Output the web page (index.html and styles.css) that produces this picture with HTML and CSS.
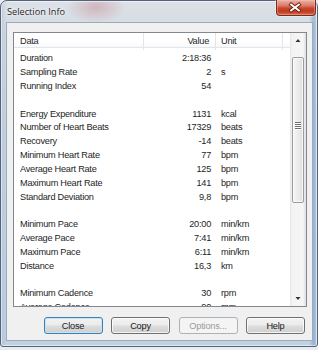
FILE: index.html
```html
<!DOCTYPE html>
<html>
<head>
<meta charset="utf-8">
<link rel="stylesheet" href="styles.css">
</head>
<body>
<div class="window">
  <div class="titlebar">
    <span class="title">Selection Info</span>
    <div class="close-btn">
      <svg width="40" height="16" viewBox="0 0 40 16">
        <g transform="translate(19.5 7.5)">
          <path d="M-4,-3 L4,3 M4,-3 L-4,3" stroke="#6a2014" stroke-width="3.8" stroke-linecap="square" fill="none"/>
          <path d="M-4,-3 L4,3 M4,-3 L-4,3" stroke="#ffffff" stroke-width="2" stroke-linecap="square" fill="none"/>
        </g>
      </svg>
    </div>
  </div>
  <div class="client">
    <div class="listbox">
      <div class="list-main">
        <div class="header">
          <div class="hcell c-data">Data</div>
          <div class="hcell c-value">Value</div>
          <div class="hcell c-unit">Unit</div>
          <div class="hcell c-fill"></div>
        </div>
        <div class="rows">
          <div class="row"><span class="c-data">Duration</span><span class="c-value">2:18:36</span><span class="c-unit"></span></div>
          <div class="row"><span class="c-data">Sampling Rate</span><span class="c-value">2</span><span class="c-unit">s</span></div>
          <div class="row"><span class="c-data">Running Index</span><span class="c-value">54</span><span class="c-unit"></span></div>
          <div class="row"><span class="c-data"></span><span class="c-value"></span><span class="c-unit"></span></div>
          <div class="row"><span class="c-data">Energy Expenditure</span><span class="c-value">1131</span><span class="c-unit">kcal</span></div>
          <div class="row"><span class="c-data">Number of Heart Beats</span><span class="c-value">17329</span><span class="c-unit">beats</span></div>
          <div class="row"><span class="c-data">Recovery</span><span class="c-value">-14</span><span class="c-unit">beats</span></div>
          <div class="row"><span class="c-data">Minimum Heart Rate</span><span class="c-value">77</span><span class="c-unit">bpm</span></div>
          <div class="row"><span class="c-data">Average Heart Rate</span><span class="c-value">125</span><span class="c-unit">bpm</span></div>
          <div class="row"><span class="c-data">Maximum Heart Rate</span><span class="c-value">141</span><span class="c-unit">bpm</span></div>
          <div class="row"><span class="c-data">Standard Deviation</span><span class="c-value">9,8</span><span class="c-unit">bpm</span></div>
          <div class="row"><span class="c-data"></span><span class="c-value"></span><span class="c-unit"></span></div>
          <div class="row"><span class="c-data">Minimum Pace</span><span class="c-value">20:00</span><span class="c-unit">min/km</span></div>
          <div class="row"><span class="c-data">Average Pace</span><span class="c-value">7:41</span><span class="c-unit">min/km</span></div>
          <div class="row"><span class="c-data">Maximum Pace</span><span class="c-value">6:11</span><span class="c-unit">min/km</span></div>
          <div class="row"><span class="c-data">Distance</span><span class="c-value">16,3</span><span class="c-unit">km</span></div>
          <div class="row"><span class="c-data"></span><span class="c-value"></span><span class="c-unit"></span></div>
          <div class="row"><span class="c-data">Minimum Cadence</span><span class="c-value">30</span><span class="c-unit">rpm</span></div>
          <div class="row"><span class="c-data">Average Cadence</span><span class="c-value">90</span><span class="c-unit">rpm</span></div>
        </div>
      </div>
      <div class="scrollbar">
        <div class="sb-arrow"><svg width="16" height="15" viewBox="0 0 16 15"><path d="M5.5,9 L8,6 L10.5,9 Z" fill="#333"/></svg></div>
        <div class="sb-thumb">
          <div class="grip"><i></i><i></i><i></i><i></i></div>
        </div>
        <div class="sb-space"></div>
        <div class="sb-arrow"><svg width="16" height="15" viewBox="0 0 16 15"><path d="M5.5,6 L8,9 L10.5,6 Z" fill="#333"/></svg></div>
      </div>
    </div>
    <div class="buttons">
      <div class="btn btn-default">Close</div>
      <div class="btn">Copy</div>
      <div class="btn btn-disabled">Options...</div>
      <div class="btn">Help</div>
    </div>
  </div>
</div>
</body>
</html>
```
FILE: styles.css
```css
html, body {
  margin: 0;
  padding: 0;
}
body {
  width: 318px;
  height: 350px;
  overflow: hidden;
  background: #e9edf1;
  font-family: "Liberation Sans", Arial, sans-serif;
}
.window {
  width: 318px;
  height: 347px;
  box-sizing: border-box;
  border: 1px solid #53647a;
  border-radius: 7px 7px 3px 3px;
  padding: 0 4px 5px 5px;
  display: flex;
  flex-direction: column;
  background:
    radial-gradient(ellipse 30px 16px at 95px 6px, rgba(196, 130, 138, 0.45), rgba(196, 130, 138, 0) 100%),
    linear-gradient(to right, rgba(150, 175, 205, 0.35) 0, rgba(150, 175, 205, 0) 6px, rgba(150, 175, 205, 0) 308px, rgba(110, 150, 200, 0.55) 313px, rgba(150, 175, 205, 0.2) 316px),
    linear-gradient(to bottom, #dde1e7 0, #d4dbe3 30px, #c9d5e2 120px, #c2d1e1 100%);
  box-shadow: inset 0 0 0 1px rgba(255, 255, 255, 0.55);
}
.titlebar {
  height: 21px;
  display: flex;
  justify-content: space-between;
  align-items: flex-start;
}
.title {
  font-family: "Open Sans", "Noto Sans", sans-serif;
  font-size: 9.2px;
  line-height: 22px;
  color: #1c1f24;
  padding-left: 1px;
  text-shadow: 0 0 5px rgba(255, 255, 255, 0.9), 0 0 2px rgba(255, 255, 255, 0.9);
}
.close-btn {
  width: 40px;
  height: 16px;
  margin-top: -1px;
  margin-right: -3px;
  box-sizing: border-box;
  border: 1px solid #7b2c1e;
  border-top: none;
  border-radius: 0 0 4px 4px;
  background: linear-gradient(to bottom, #eab0a4 0, #dc8270 35%, #c8462c 55%, #c23a20 75%, #d66a4c 100%);
  box-shadow: inset 0 0 0 1px rgba(255, 210, 200, 0.35), 0 0 0 1px rgba(255, 255, 255, 0.35);
  display: flex;
}
.close-btn svg {
  display: block;
  margin-left: -1px;
}
.client {
  flex: 1;
  background: #f0f0f0;
  border: 1px solid #9aabbd;
  padding: 9px 5px 6px 6px;
  display: flex;
  flex-direction: column;
}
.listbox {
  height: 275px;
  box-sizing: border-box;
  border: 1px solid #828790;
  background: #ffffff;
  display: flex;
  overflow: hidden;
}
.list-main {
  flex: 1;
  overflow: hidden;
  font-size: 9.2px;
  letter-spacing: -0.25px;
  color: #1e1e1e;
}
.header {
  display: grid;
  grid-template-columns: 130px 72px 67px 1fr;
  height: 15px;
  box-sizing: border-box;
  border-bottom: 1px solid #e5e5e5;
  background: linear-gradient(to bottom, #ffffff 0, #ffffff 60%, #f7f8f9 100%);
}
.hcell {
  line-height: 17px;
  border-right: 1px solid #e3e5e8;
  white-space: nowrap;
}
.hcell.c-fill {
  border-right: none;
}
.rows {
  padding-top: 4.4px;
}
.row {
  display: grid;
  grid-template-columns: 130px 72px 67px;
  height: 13.82px;
  line-height: 13.82px;
  white-space: nowrap;
}
.c-data {
  padding-left: 6px;
}
.c-value {
  text-align: right;
  padding-right: 5px;
}
.hcell.c-value {
  padding-right: 6px;
}
.c-unit {
  padding-left: 5px;
}
.scrollbar {
  width: 16px;
  display: flex;
  flex-direction: column;
  background: linear-gradient(to right, #e4e5e8 0, #f3f3f3 2px, #f6f6f6 13px, #e6e6e8 15px, #dcdde0 16px);
}
.sb-arrow {
  height: 15px;
}
.sb-arrow svg {
  display: block;
}
.sb-thumb {
  margin: 9px 2px 0 2px;
  height: 146px;
  box-sizing: border-box;
  border: 1px solid #9c9c9c;
  border-radius: 2px;
  background: linear-gradient(to right, #f6f6f6 0, #ececec 50%, #dedede 100%);
  box-shadow: inset 0 0 0 1px rgba(255, 255, 255, 0.7);
  display: flex;
  align-items: center;
  justify-content: center;
}
.grip {
  display: flex;
  flex-direction: column;
  gap: 1px;
  margin-top: -10px;
}
.grip i {
  display: block;
  width: 6px;
  height: 1px;
  background: #6d6d6d;
  box-shadow: 0 1px 0 #fff;
}
.sb-space {
  flex: 1;
}
.buttons {
  margin-top: 10px;
  height: 17px;
  display: flex;
  justify-content: flex-end;
  gap: 8.5px;
  padding-right: 2px;
}
.btn {
  width: 59px;
  height: 17px;
  box-sizing: border-box;
  border: 1px solid #707070;
  border-radius: 3px;
  background: linear-gradient(to bottom, #f3f3f3 0, #ebebeb 48%, #dddddd 52%, #cfcfcf 100%);
  box-shadow: inset 0 0 0 1px rgba(255, 255, 255, 0.75);
  font-size: 9.2px;
  letter-spacing: -0.2px;
  color: #1a1a1a;
  display: flex;
  align-items: center;
  justify-content: center;
}
.btn-default {
  border-color: #3c7fb1;
  box-shadow: inset 0 0 0 1px #c6e4f5;
}
.btn-disabled {
  border-color: #adb2b5;
  background: #f4f4f4;
  box-shadow: none;
  color: #9b9b9b;
}
```
